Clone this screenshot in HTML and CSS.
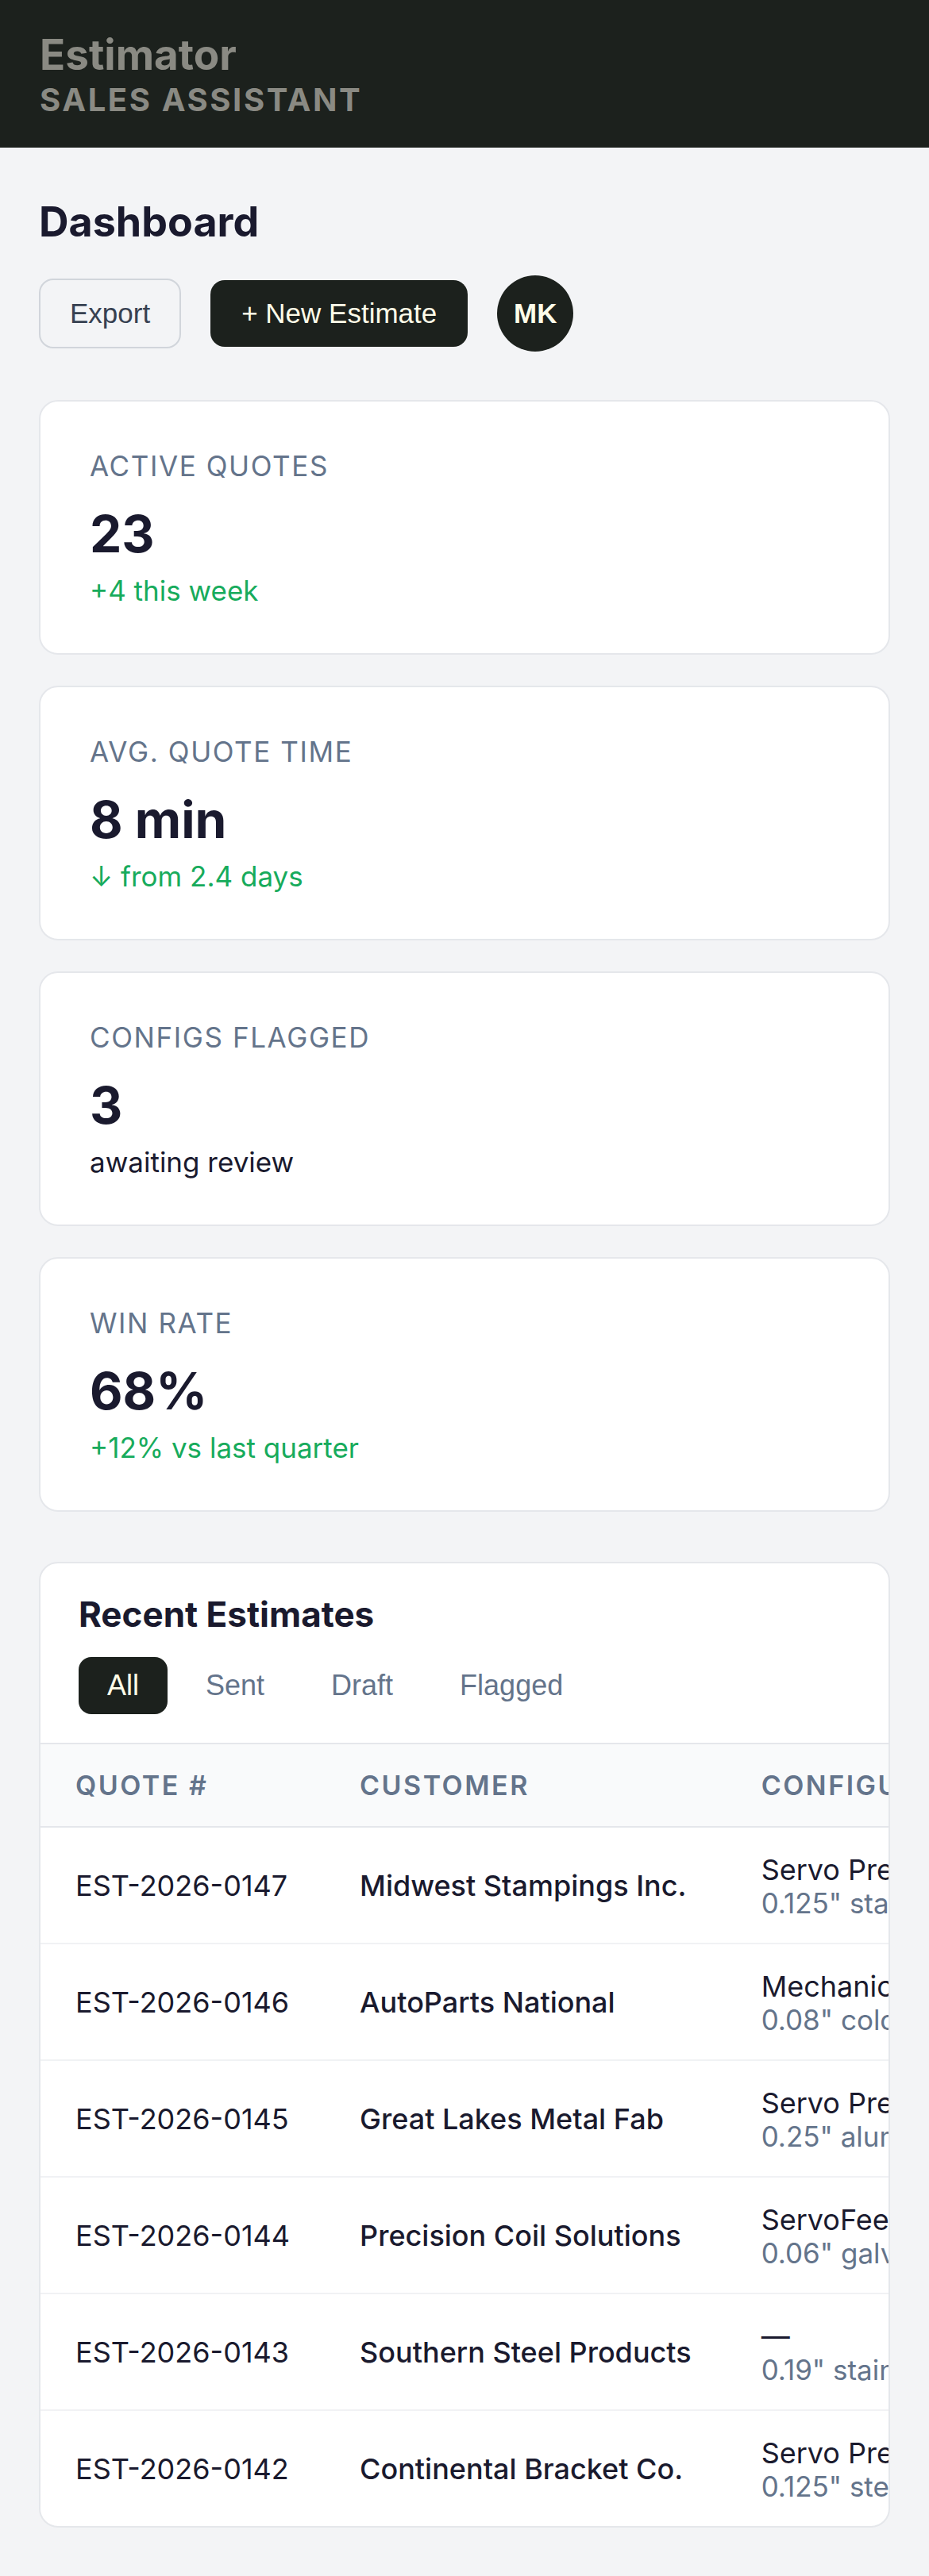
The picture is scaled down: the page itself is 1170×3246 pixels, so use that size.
FILE: index.html
```html
<!DOCTYPE html>
<html lang="en">
<head>
<meta charset="utf-8">
<title>Estimator – Sales Assistant</title>
<link rel="stylesheet" href="styles.css">
</head>
<body>
<header class="topbar">
  <div class="brand">Estimator</div>
  <div class="brand-sub">SALES ASSISTANT</div>
</header>
<main class="page">
  <h1 class="page-title">Dashboard</h1>
  <div class="actions">
    <button class="btn btn-outline">Export</button>
    <button class="btn btn-dark">+ New Estimate</button>
    <div class="avatar">MK</div>
  </div>

  <section class="stats">
    <div class="stat-card">
      <div class="stat-label">ACTIVE QUOTES</div>
      <div class="stat-value">23</div>
      <div class="stat-sub up">+4 this week</div>
    </div>
    <div class="stat-card">
      <div class="stat-label">AVG. QUOTE TIME</div>
      <div class="stat-value">8 min</div>
      <div class="stat-sub up">↓ from 2.4 days</div>
    </div>
    <div class="stat-card">
      <div class="stat-label">CONFIGS FLAGGED</div>
      <div class="stat-value">3</div>
      <div class="stat-sub">awaiting review</div>
    </div>
    <div class="stat-card">
      <div class="stat-label">WIN RATE</div>
      <div class="stat-value">68%</div>
      <div class="stat-sub up">+12% vs last quarter</div>
    </div>
  </section>

  <section class="estimates">
    <div class="est-head">
      <h2 class="est-title">Recent Estimates</h2>
      <div class="tabs">
        <button class="tab active">All</button>
        <button class="tab">Sent</button>
        <button class="tab">Draft</button>
        <button class="tab">Flagged</button>
      </div>
    </div>
    <div class="table-wrap">
      <table class="est-table">
        <thead>
          <tr>
            <th>QUOTE #</th>
            <th>CUSTOMER</th>
            <th>CONFIGURATION</th>
            <th>VALUE</th>
            <th>STATUS</th>
            <th>UPDATED</th>
          </tr>
        </thead>
        <tbody>
          <tr>
            <td>EST-2026-0147</td>
            <td class="cust">Midwest Stampings Inc.</td>
            <td><div class="cfg-main">Servo Press SP-400</div><div class="cfg-sub">0.125" stainless, 24" coil</div></td>
            <td>$184,500</td>
            <td>Sent</td>
            <td>Today</td>
          </tr>
          <tr>
            <td>EST-2026-0146</td>
            <td class="cust">AutoParts National</td>
            <td><div class="cfg-main">Mechanical Press MP-250</div><div class="cfg-sub">0.08" cold-rolled, 18" coil</div></td>
            <td>$126,200</td>
            <td>Draft</td>
            <td>Today</td>
          </tr>
          <tr>
            <td>EST-2026-0145</td>
            <td class="cust">Great Lakes Metal Fab</td>
            <td><div class="cfg-main">Servo Press SP-600</div><div class="cfg-sub">0.25" aluminum, 36" coil</div></td>
            <td>$242,900</td>
            <td>Sent</td>
            <td>Yesterday</td>
          </tr>
          <tr>
            <td>EST-2026-0144</td>
            <td class="cust">Precision Coil Solutions</td>
            <td><div class="cfg-main">ServoFeed SF-300</div><div class="cfg-sub">0.06" galvanized, 12" coil</div></td>
            <td>$68,750</td>
            <td>Sent</td>
            <td>Jan 12</td>
          </tr>
          <tr>
            <td>EST-2026-0143</td>
            <td class="cust">Southern Steel Products</td>
            <td><div class="cfg-main">—</div><div class="cfg-sub">0.19" stainless, 30" coil</div></td>
            <td>—</td>
            <td>Flagged</td>
            <td>Jan 11</td>
          </tr>
          <tr>
            <td>EST-2026-0142</td>
            <td class="cust">Continental Bracket Co.</td>
            <td><div class="cfg-main">Servo Press SP-400</div><div class="cfg-sub">0.125" steel, 20" coil</div></td>
            <td>$171,300</td>
            <td>Sent</td>
            <td>Jan 10</td>
          </tr>
        </tbody>
      </table>
    </div>
  </section>
</main>
</body>
</html>
```

FILE: styles.css
```css
* { box-sizing: border-box; }

body {
  margin: 0;
  background: #f3f4f6;
  font-family: Inter, "Noto Sans", sans-serif;
  color: #1a1a2e;
}

.topbar {
  background: #1c211d;
  padding: 37px 50px 36px;
  color: #8a8a83;
}

.brand {
  font-size: 53px;
  line-height: 65px;
  font-weight: 700;
}

.brand-sub {
  font-size: 40px;
  line-height: 48px;
  font-weight: 700;
  letter-spacing: 2.6px;
}

.page {
  padding: 63px 49px 61px;
}

.page-title {
  margin: 0;
  font-size: 52px;
  line-height: 62px;
  font-weight: 700;
  color: #1a1a2e;
}

.actions {
  display: flex;
  align-items: center;
  gap: 37px;
  margin-top: 36px;
  height: 96px;
}

.btn {
  font-family: "Liberation Sans", Arial, sans-serif;
  font-size: 35px;
  line-height: 40px;
  border-radius: 18px;
  cursor: pointer;
}

.btn-outline {
  background: transparent;
  border: 2px solid #d1d5db;
  color: #374151;
  padding: 22px 37px;
}

.btn-dark {
  background: #1c211d;
  border: none;
  color: #fefce8;
  padding: 22px 39px;
}

.avatar {
  width: 96px;
  height: 96px;
  border-radius: 50%;
  background: #1c211d;
  color: #fefce8;
  font-family: "Liberation Sans", Arial, sans-serif;
  font-size: 35px;
  font-weight: 700;
  display: flex;
  align-items: center;
  justify-content: center;
}

.stats {
  display: flex;
  flex-direction: column;
  gap: 39px;
  margin-top: 61px;
}

.stat-card {
  background: #ffffff;
  border: 2px solid #e5e7eb;
  border-radius: 24px;
  padding: 60px 62px 59px;
}

.stat-label {
  font-size: 35px;
  line-height: 42px;
  letter-spacing: 1.6px;
  color: #64748b;
}

.stat-value {
  margin-top: 25px;
  font-size: 64px;
  line-height: 80px;
  font-weight: 700;
  color: #1a1a2e;
}

.stat-sub {
  margin-top: 11px;
  font-size: 35px;
  line-height: 40px;
  color: #1a1a2e;
}

.stat-sub.up { color: #17ab5c; }

.estimates {
  margin-top: 63px;
  background: #ffffff;
  border: 2px solid #e5e7eb;
  border-radius: 24px;
  overflow: hidden;
}

.est-head {
  padding: 39px 48px 36px;
}

.est-title {
  margin: 0;
  font-size: 44px;
  line-height: 50px;
  font-weight: 700;
  color: #1a1a2e;
}

.tabs {
  display: flex;
  gap: 12px;
  margin-top: 29px;
}

.tab {
  font-family: "Liberation Sans", Arial, sans-serif;
  font-size: 36px;
  line-height: 40px;
  padding: 16px 36px;
  border: none;
  border-radius: 16px;
  background: transparent;
  color: #64748b;
  cursor: pointer;
}

.tab.active {
  background: #1c211d;
  color: #fefce8;
}

.table-wrap {
  overflow: hidden;
}

.est-table {
  border-collapse: separate;
  border-spacing: 0;
  white-space: nowrap;
}

.est-table th {
  background: #f9fafb;
  border-top: 2px solid #e5e7eb;
  border-bottom: 2px solid #e5e7eb;
  padding: 31px 44px;
  font-size: 34px;
  line-height: 41px;
  font-weight: 600;
  letter-spacing: 2.5px;
  color: #64748b;
  text-align: left;
}

.est-table td {
  padding: 31px 44px 30px;
  border-bottom: 2px solid #f1f2f4;
  vertical-align: middle;
  font-size: 36px;
  line-height: 44px;
  color: #1a1a2e;
}

.est-table tbody tr:last-child td { border-bottom: none; }

.est-table td.cust { font-weight: 500; }

.cfg-main {
  font-size: 36px;
  line-height: 44px;
}

.cfg-sub {
  font-size: 35px;
  line-height: 40px;
  color: #64748b;
}
```
